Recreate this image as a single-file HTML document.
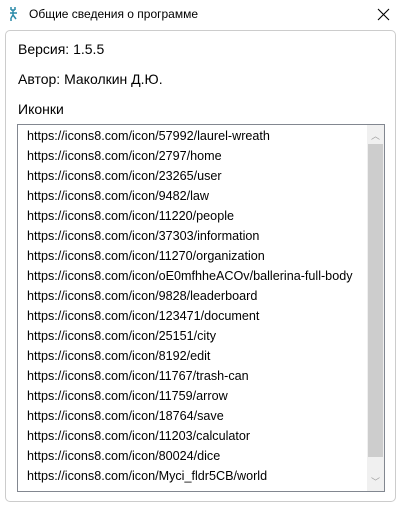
<!DOCTYPE html>
<html><head><meta charset="utf-8"><style>
body{margin:0;width:401px;height:509px;background:#fff;font-family:"Liberation Sans",sans-serif;position:relative;overflow:hidden;color:#000}
.t{position:absolute;left:29px;top:7px;font-size:12px}
.g{position:absolute;left:5px;top:30px;width:391px;height:472px;border:1px solid #ccc;border-radius:5px;box-sizing:border-box}
.l{position:absolute;left:18px;font-size:14px}
.lb{position:absolute;left:17px;top:124px;width:368px;height:368px;border:1px solid #828790;box-sizing:border-box}
.it{position:absolute;left:9px;font-size:12.6px;white-space:nowrap}
.sb{position:absolute;right:0;top:0;width:17px;height:366px;background:#f0f0f0}
.th{position:absolute;left:1px;top:19px;width:15px;height:313px;background:#cdcdcd}
.ar{position:absolute;left:0;width:17px;text-align:center;font-size:9px;color:#a0a0a0}
</style></head><body>
<svg style="position:absolute;left:8px;top:6px" width="14" height="16" viewBox="0 0 14 16"><path d="M3 1 L3 4 M7 1 L7 4 M3 4 L7 4 M5 4 L5 9 M2 7 L9 7 M5 9 L3 12 M5 9 L8 13 M3 12 L3 15" stroke="#2a8aa8" stroke-width="1.5" fill="none"/></svg>
<div class="t">Общие сведения о программе</div>
<svg style="position:absolute;left:377px;top:8px" width="13" height="13" viewBox="0 0 13 13"><path d="M1 1 L12 12 M12 1 L1 12" stroke="#000" stroke-width="1.1" fill="none"/></svg>
<div class="g"></div>
<div class="l" style="top:41px">Версия: 1.5.5</div>
<div class="l" style="top:71px">Автор: Маколкин Д.Ю.</div>
<div class="l" style="top:101px">Иконки</div>
<div class="lb">
<div class="it" style="top:4px">https://icons8.com/icon/57992/laurel-wreath</div>
<div class="it" style="top:24px">https://icons8.com/icon/2797/home</div>
<div class="it" style="top:44px">https://icons8.com/icon/23265/user</div>
<div class="it" style="top:64px">https://icons8.com/icon/9482/law</div>
<div class="it" style="top:84px">https://icons8.com/icon/11220/people</div>
<div class="it" style="top:104px">https://icons8.com/icon/37303/information</div>
<div class="it" style="top:124px">https://icons8.com/icon/11270/organization</div>
<div class="it" style="top:144px">https://icons8.com/icon/oE0mfhheACOv/ballerina-full-body</div>
<div class="it" style="top:164px">https://icons8.com/icon/9828/leaderboard</div>
<div class="it" style="top:184px">https://icons8.com/icon/123471/document</div>
<div class="it" style="top:204px">https://icons8.com/icon/25151/city</div>
<div class="it" style="top:224px">https://icons8.com/icon/8192/edit</div>
<div class="it" style="top:244px">https://icons8.com/icon/11767/trash-can</div>
<div class="it" style="top:264px">https://icons8.com/icon/11759/arrow</div>
<div class="it" style="top:284px">https://icons8.com/icon/18764/save</div>
<div class="it" style="top:304px">https://icons8.com/icon/11203/calculator</div>
<div class="it" style="top:324px">https://icons8.com/icon/80024/dice</div>
<div class="it" style="top:344px">https://icons8.com/icon/Myci_fldr5CB/world</div>
<div class="sb"><div class="ar" style="top:4px">︿</div><div class="th"></div><div class="ar" style="top:350px">﹀</div></div>
</div>
</body></html>
